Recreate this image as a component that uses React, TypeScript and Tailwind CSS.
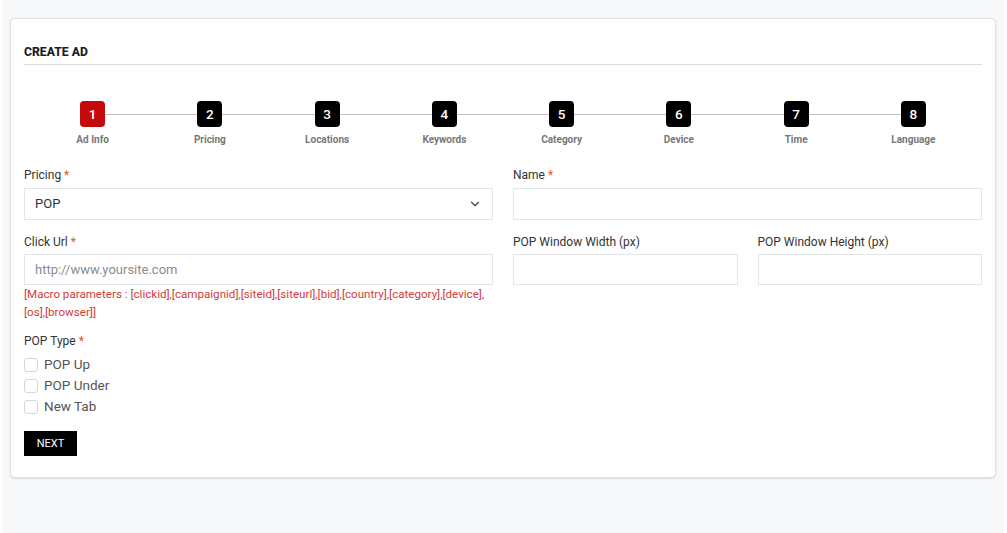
import { ChevronDown } from 'lucide-react';

const steps = ['Ad Info', 'Pricing', 'Locations', 'Keywords', 'Category', 'Device', 'Time', 'Language'];

function Label({ text, required }: { text: string; required?: boolean }) {
  return (
    <label className="block text-[12px] leading-[16px] text-[#333]">
      {text}
      {required && <span className="text-[#e8542c]"> *</span>}
    </label>
  );
}

function TextInput({ placeholder }: { placeholder?: string }) {
  return (
    <input
      type="text"
      placeholder={placeholder}
      className="block w-full h-[31px] border border-[#e3e5e8] bg-white px-[10px] text-[13px] text-[#333] placeholder:text-[#8c8c8c] outline-none"
    />
  );
}

export default function App() {
  return (
    <div className="min-h-[533px] bg-[#f7f8fa] border-l-2 border-r-[3px] border-white pt-[18px] px-[8px] pb-[54px] font-['Roboto',sans-serif]">
      <div className="bg-white border border-[#dfe1e4] rounded-[5px] shadow-[0_1px_2px_rgba(0,0,0,0.12)] px-[13px] pt-[25px] pb-[21px]">
        {/* Header */}
        <div className="border-b border-[#dcdcdc] pb-[4px]">
          <h2 className="text-[12.2px] leading-[16px] font-[800] text-[#1c1c1c]">CREATE AD</h2>
        </div>

        {/* Stepper */}
        <div className="relative mx-[10px] mt-[36px]">
          <div className="absolute left-[6.25%] right-[6.25%] top-[13px] h-px bg-[#cbbcbc]" />
          <div className="relative grid grid-cols-8">
            {steps.map((s, i) => (
              <div key={s} className="flex flex-col items-center">
                <div
                  className={`w-[25px] h-[26px] rounded-[4px] flex items-center justify-center text-white text-[13.5px] font-medium ${
                    i === 0 ? 'bg-[#c40a0a]' : 'bg-black'
                  }`}
                >
                  {i + 1}
                </div>
                <span className="mt-[6px] text-[10px] leading-[14px] font-bold text-[#777]">{s}</span>
              </div>
            ))}
          </div>
        </div>

        {/* Form */}
        <div className="grid grid-cols-2 gap-x-[20px] mt-[20px]">
          <div>
            <Label text="Pricing" required />
            <div className="mt-[5px] h-[32px] border border-[#e3e5e8] flex items-center justify-between pl-[10px] pr-[10px]">
              <span className="text-[13px] text-[#333]">POP</span>
              <ChevronDown className="w-[14px] h-[14px] text-[#444]" strokeWidth={2} />
            </div>

            <div className="mt-[14px]">
              <Label text="Click Url" required />
              <div className="mt-[4px]">
                <TextInput placeholder="http://www.yoursite.com" />
              </div>
              <p className="text-[11.6px] leading-[18px] text-[#d13b3b]">
                [Macro parameters : [clickid],[campaignid],[siteid],[siteurl],[bid],[country],[category],[device],[os],[browser]]
              </p>
            </div>

            <div className="mt-[12px]">
              <Label text="POP Type" required />
              <div className="mt-[5px]">
                {['POP Up', 'POP Under', 'New Tab'].map((o) => (
                  <label key={o} className="flex items-center gap-[6px] h-[21px] text-[13.5px] text-[#555]">
                    <span className="w-[14px] h-[14px] rounded-[3px] border border-[#d3d6da] bg-white" />
                    {o}
                  </label>
                ))}
              </div>
            </div>

            <button className="mt-[14px] w-[53px] h-[25px] bg-black text-white text-[11px] leading-none">NEXT</button>
          </div>

          <div>
            <Label text="Name" required />
            <div className="mt-[5px]">
              <input className="block w-full h-[32px] border border-[#e3e5e8] px-[10px] outline-none" />
            </div>
            <div className="mt-[14px] grid grid-cols-2 gap-x-[20px]">
              <div>
                <Label text="POP Window Width (px)" />
                <div className="mt-[4px]">
                  <TextInput />
                </div>
              </div>
              <div>
                <Label text="POP Window Height (px)" />
                <div className="mt-[4px]">
                  <TextInput />
                </div>
              </div>
            </div>
          </div>
        </div>
      </div>
    </div>
  );
}
